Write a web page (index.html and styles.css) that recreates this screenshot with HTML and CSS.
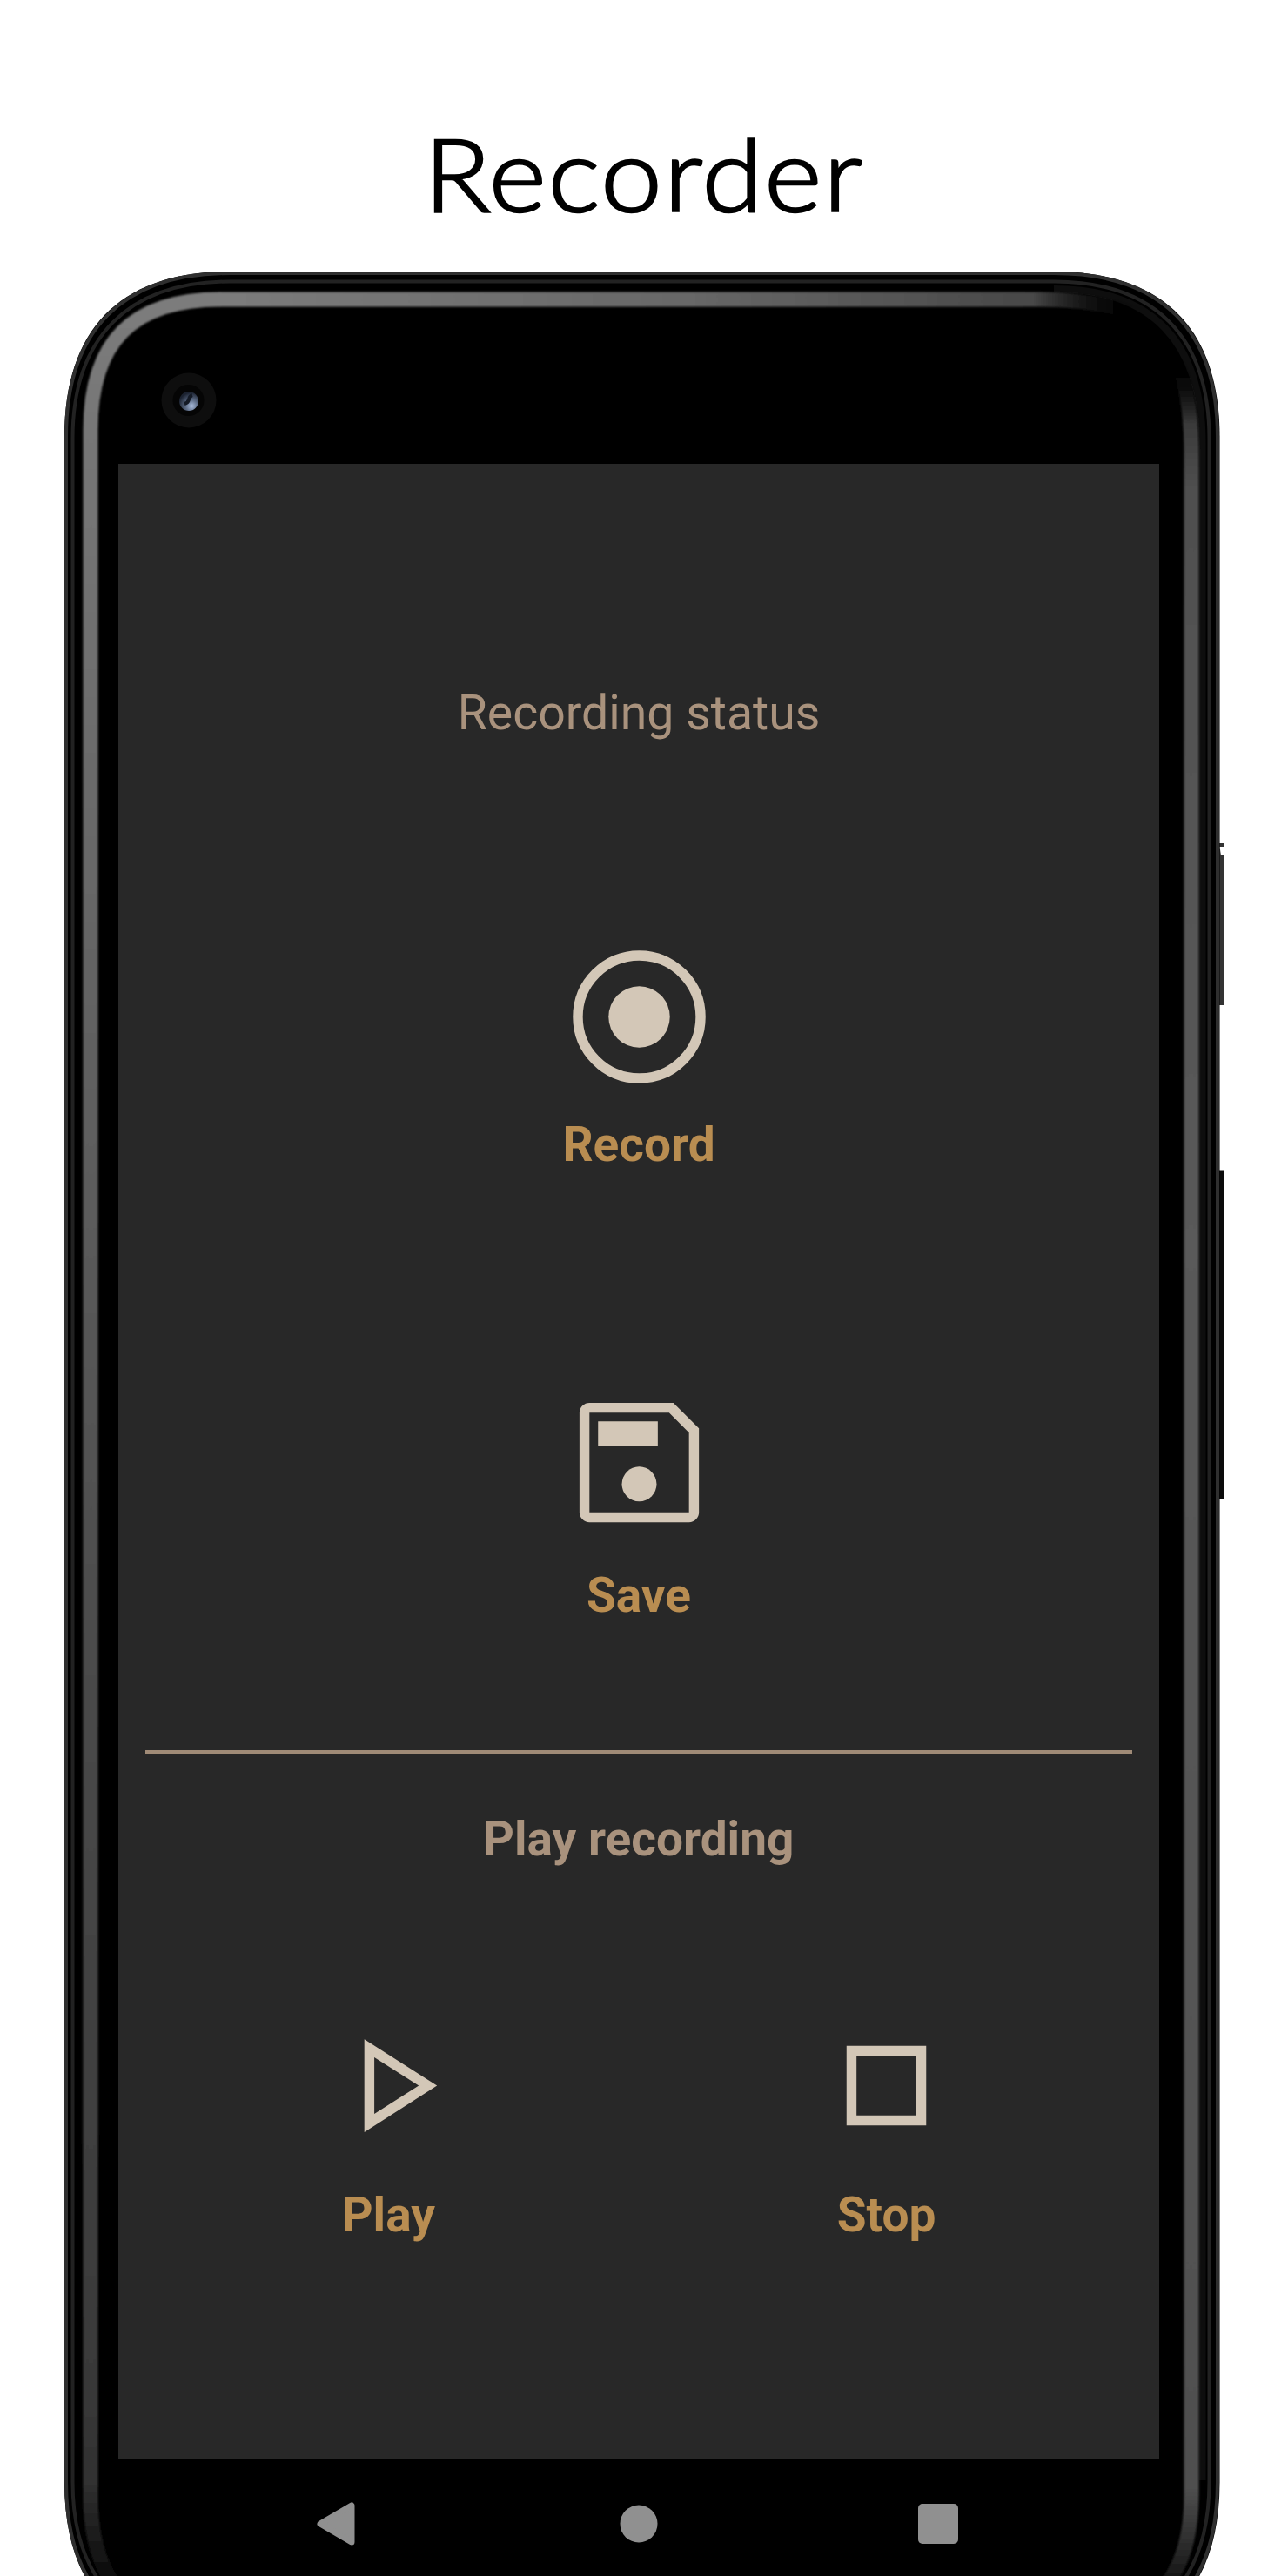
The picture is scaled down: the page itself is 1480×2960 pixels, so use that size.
FILE: index.html
```html
<!DOCTYPE html>
<html lang="en">
<head>
<meta charset="utf-8">
<title>Recorder</title>
<link rel="stylesheet" href="styles.css">
</head>
<body>
<main class="page">
  <svg class="device" viewBox="0 0 1480 2960" aria-hidden="true">
    <defs>
      <linearGradient id="leftRim" x1="0" y1="335" x2="0" y2="2960" gradientUnits="userSpaceOnUse">
        <stop offset="0" stop-color="#7c7c7c"/><stop offset=".15" stop-color="#707070"/><stop offset=".64" stop-color="#484848"/><stop offset=".92" stop-color="#393939"/><stop offset=".96" stop-color="#303030"/><stop offset="1" stop-color="#0c0c0c"/>
      </linearGradient>
      <linearGradient id="topRim" x1="250" y1="0" x2="1315" y2="0" gradientUnits="userSpaceOnUse">
        <stop offset="0" stop-color="#7c7c7c"/><stop offset=".5" stop-color="#686868"/><stop offset=".88" stop-color="#484848"/><stop offset="1" stop-color="#000" stop-opacity="0"/>
      </linearGradient>
      <linearGradient id="rightRim" x1="0" y1="410" x2="0" y2="2960" gradientUnits="userSpaceOnUse">
        <stop offset="0" stop-color="#000" stop-opacity="0"/><stop offset=".03" stop-color="#3a3a3a"/><stop offset=".06" stop-color="#505050"/><stop offset=".4" stop-color="#5a5a5a"/><stop offset=".96" stop-color="#505050"/><stop offset="1" stop-color="#181818"/>
      </linearGradient>
      <filter id="soft" x="-10%" y="-10%" width="120%" height="120%"><feGaussianBlur stdDeviation="1"/></filter>
      <radialGradient id="lens" cx=".65" cy=".75" r=".7">
        <stop offset="0" stop-color="#a9bcdb"/><stop offset=".45" stop-color="#5d6c86"/><stop offset="1" stop-color="#1b2230"/>
      </radialGradient>
    </defs>
    <path d="M1398 969h8v186h-8z" fill="#333"/>
    <path d="M1401.500 973h4.500v9l-3 1z" fill="#fff"/>
    <path d="M1400 1344.500h6v378h-6z" fill="#0b0b0b"/>
    <path d="M74 502C74 377 139 312 264 312H1211C1336 312 1401.500 377 1401.500 502V2852C1401.500 2977 1336 3042 1211 3042H264C139 3042 74 2977 74 2852Z" fill="#000"/>
    <g fill="none">
      <path d="M1381.500 2850V509C1381.500 392 1323 332 1211 332" stroke="#0e0e0e" stroke-width="8"/>
      <path d="M76 502C76 379 141 314 264 314H1211C1334 314 1399 379 1399 502V2852C1399 2975 1334 3040 1211 3040H264C141 3040 76 2975 76 2852Z" stroke="#2f2f2f" stroke-width="4"/>
      <path d="M83.500 504C83.500 387 148 323.500 264 323.500H1211C1327 323.500 1389.500 387 1389.500 504V2852C1389.500 2968 1327 3031 1211 3031H264C148 3031 83.500 2968 83.500 2852Z" stroke="#222" stroke-width="4"/>
      <g stroke-width="17" filter="url(#soft)">
        <path d="M253 344C152 344 104 393 104 494V2868C104 2969 152 3018 253 3018" stroke="url(#leftRim)"/>
        <path d="M252 344H1195Q1262 344 1318 364" stroke="url(#topRim)"/>
        <path d="M1350 408Q1369 450 1369 520V2868C1369 2965 1320 3018 1220 3018" stroke="url(#rightRim)"/>
      </g>
    </g>
    <circle cx="217" cy="460" r="31.500" fill="#0e0e0e"/>
    <circle cx="216.500" cy="460" r="18" fill="#050505"/>
    <circle cx="217" cy="461" r="11" fill="url(#lens)"/>
    <path d="M212 464q4-1 5-5t4-5" stroke="#141a25" stroke-width="4" fill="none"/>
  </svg>

  <h1 class="title">Recorder</h1>

  <section class="screen">
    <p class="status">Recording status</p>
    <button class="action record">
      <svg class="icon" viewBox="0 0 24 24"><circle cx="12" cy="12" r="9.250" fill="none" stroke="currentColor" stroke-width="1.500"/><circle cx="12" cy="12" r="4.620" fill="currentColor"/></svg>
      <span class="label">Record</span>
    </button>
    <button class="action save">
      <svg class="icon" viewBox="0 0 24 24"><path fill="currentColor" fill-rule="evenodd" d="M4.500 3H17.150L21 6.850V19.500A1.500 1.500 0 0 1 19.500 21H4.500A1.500 1.500 0 0 1 3 19.500V4.500A1.500 1.500 0 0 1 4.500 3ZM4.500 4.500V19.500H19.500V7.500L16.500 4.500ZM5.800 5.800H14.800V9.450H5.800Z"/><circle cx="12" cy="15.250" r="2.620" fill="currentColor"/></svg>
      <span class="label">Save</span>
    </button>
    <hr class="divider">
    <h2 class="subtitle">Play recording</h2>
    <div class="playback">
      <button class="action">
        <svg class="icon" viewBox="0 0 24 24"><path fill="currentColor" fill-rule="evenodd" d="M8.350 5V19L19.300 12ZM9.850 7.750L16.550 12L9.850 16.250Z"/></svg>
        <span class="label">Play</span>
      </button>
      <button class="action">
        <svg class="icon" viewBox="0 0 24 24"><path fill="currentColor" fill-rule="evenodd" d="M6 6H18V18H6ZM7.500 7.500V16.500H16.500V7.500Z"/></svg>
        <span class="label">Stop</span>
      </button>
    </div>
  </section>

  <nav class="navbar">
    <svg class="nav-icon" viewBox="0 0 50 50"><path d="M3 25L39 4V46Z" fill="#909090" stroke="#909090" stroke-width="7" stroke-linejoin="round"/></svg>
    <svg class="nav-icon" viewBox="0 0 50 50"><circle cx="25" cy="25" r="21.500" fill="#909090"/></svg>
    <svg class="nav-icon" viewBox="0 0 50 50"><rect x="2" y="2" width="46" height="46" rx="5" fill="#909090"/></svg>
  </nav>
</main>
</body>
</html>
```
FILE: styles.css
```css
* { box-sizing: border-box; }

body {
  margin: 0;
  background: #fff;
}

.page {
  position: relative;
  display: flex;
  flex-direction: column;
  width: 1480px;
  height: 2960px;
  overflow: hidden;
  font-family: Roboto, sans-serif;
}

.device {
  position: absolute;
  inset: 0;
  width: 1480px;
  height: 2960px;
}

.title,
.screen,
.navbar {
  position: relative;
}

.title {
  height: 533px;
  margin: 0;
  padding-top: 126px;
  color: #000;
  font: 300 117px/144px Lato, sans-serif;
  letter-spacing: 2px;
  text-align: center;
  transform: scaleX(1.08);
  -webkit-text-stroke: 2.6px #000;
}

.screen {
  display: flex;
  flex-direction: column;
  align-items: center;
  width: 1196px;
  height: 2293px;
  margin-left: 136px;
  padding-top: 255px;
  background: #282828;
}

.status,
.subtitle {
  margin: 0;
  color: #a9927d;
  font-size: 55px;
  font-weight: 400;
  line-height: 64px;
}

.status { font-size: 55.4px; }

.subtitle {
  margin-top: 66px;
  font-weight: 700;
}

.action {
  display: flex;
  flex-direction: column;
  align-items: center;
  gap: 23px;
  padding: 0;
  border: 0;
  background: none;
  color: #d3c7b7;
  font: 700 55px/64px Roboto, sans-serif;
}

.record { margin-top: 225px; }

.save {
  gap: 29px;
  margin-top: 242px;
}

.icon {
  display: block;
  width: 183px;
  height: 183px;
}

.label { color: #b98d51; }

.divider {
  width: 1134px;
  height: 4px;
  margin: 146px 0 0;
  border: 0;
  background: #a08b77;
}

.playback {
  display: grid;
  grid-template-columns: 572px 572px;
  margin: 160px 3px 0 0;
}

.playback .action { gap: 25px; }

.navbar {
  display: flex;
  justify-content: space-between;
  width: 738px;
  margin: 49px 0 0 365px;
}

.nav-icon {
  width: 50px;
  height: 50px;
  overflow: visible;
}
```
